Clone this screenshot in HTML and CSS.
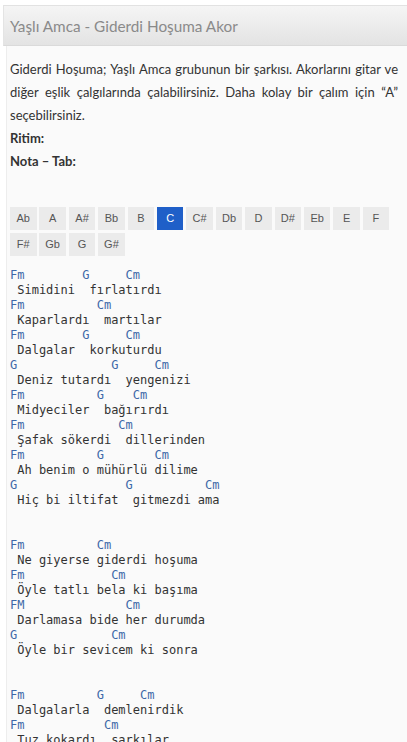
FILE: index.html
```html
<!DOCTYPE html>
<html lang="tr">
<head>
<meta charset="utf-8">
<title>Yaşlı Amca - Giderdi Hoşuma Akor</title>
<link rel="stylesheet" href="styles.css">
</head>
<body>
<div class="page">
  <div class="header"><h1 class="title">Yaşlı Amca - Giderdi Hoşuma Akor</h1></div>
  <div class="content">
    <p class="intro">Giderdi Hoşuma; Yaşlı Amca grubunun bir şarkısı. Akorlarını gitar ve diğer eşlik çalgılarında çalabilirsiniz. Daha kolay bir çalım için “A” seçebilirsiniz.</p>
    <p class="label">Ritim:</p>
    <p class="label">Nota – Tab:</p>
    <div class="keys">
      <span class="key">Ab</span><span class="key">A</span><span class="key">A#</span><span class="key">Bb</span><span class="key">B</span><span class="key active">C</span><span class="key">C#</span><span class="key">Db</span><span class="key">D</span><span class="key">D#</span><span class="key">Eb</span><span class="key">E</span><span class="key">F</span><span class="key">F#</span><span class="key">Gb</span><span class="key">G</span><span class="key">G#</span>
    </div>
<pre class="song"><span class="ch">Fm        G     Cm</span>
 Simidini  fırlatırdı
<span class="ch">Fm          Cm</span>
 Kaparlardı  martılar
<span class="ch">Fm        G     Cm</span>
 Dalgalar  korkuturdu
<span class="ch">G             G     Cm</span>
 Deniz tutardı  yengenizi
<span class="ch">Fm          G    Cm</span>
 Midyeciler  bağırırdı
<span class="ch">Fm             Cm</span>
 Şafak sökerdi  dillerinden
<span class="ch">Fm          G       Cm</span>
 Ah benim o mühürlü dilime
<span class="ch">G               G          Cm</span>
 Hiç bi iltifat  gitmezdi ama


<span class="ch">Fm          Cm</span>
 Ne giyerse giderdi hoşuma
<span class="ch">Fm            Cm</span>
 Öyle tatlı bela ki başıma
<span class="ch">FM              Cm</span>
 Darlamasa bide her durumda
<span class="ch">G             Cm</span>
 Öyle bir sevicem ki sonra


<span class="ch">Fm          G     Cm</span>
 Dalgalarla  demlenirdik
<span class="ch">Fm           Cm</span>
 Tuz kokardı  şarkılar
</pre>
  </div>
</div>
</body>
</html>
```

FILE: styles.css
```css
html, body {
  margin: 0;
  padding: 0;
  background: #ffffff;
}
.page {
  padding-top: 5px;
}
.header {
  margin-left: 3px;
  height: 39px;
  border-top: 1px solid #e2e2e2;
  border-bottom: 1px solid #dadada;
  border-left: 1px solid #e4e4e4;
  background: linear-gradient(to bottom, #f5f5f5, #e3e3e3);
  display: flex;
  align-items: center;
  padding-left: 6px;
}
.title {
  margin: 0;
  font-family: Lato, "Open Sans", sans-serif;
  font-weight: normal;
  font-size: 15.3px;
  color: #8a8a8a;
}
.content {
  margin-left: 6px;
  border-left: 1px solid #ededed;
  background: #fafafa;
  padding: 12px 9px 0 3px;
  font-family: Lato, "Open Sans", sans-serif;
  font-size: 13px;
  line-height: 23px;
  color: #333;
}
.intro {
  margin: 0;
  text-align: justify;
}
.label {
  margin: 0;
  font-weight: bold;
}
.keys {
  margin-top: 34px;
  display: flex;
  flex-wrap: wrap;
  column-gap: 2.9px;
  row-gap: 3px;
  width: 385px;
}
.key {
  width: 26.5px;
  height: 23px;
  background: #ebebeb;
  color: #555;
  font-family: "Liberation Sans", Arial, sans-serif;
  font-size: 11px;
  line-height: 23px;
  text-align: center;
}
.key.active {
  background: #1f5fc8;
  color: #fff;
}
.song {
  margin: 12px 0 0 0;
  font-family: "DejaVu Sans Mono", "Liberation Mono", monospace;
  font-size: 12px;
  line-height: 15px;
  color: #333;
}
.ch {
  color: #3d68a8;
}
```
